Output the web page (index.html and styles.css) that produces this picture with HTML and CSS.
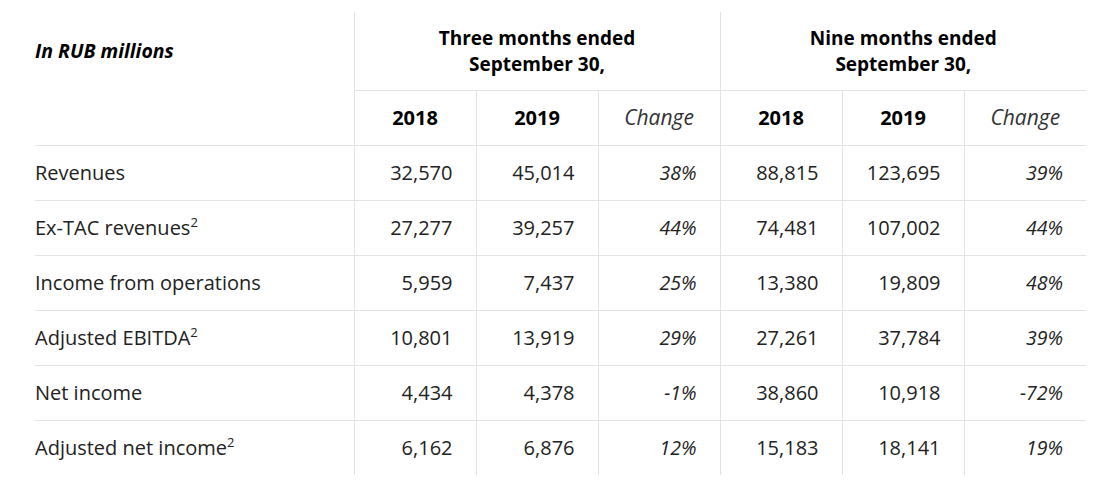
FILE: index.html
```html
<!DOCTYPE html>
<html lang="en">
<head>
<meta charset="utf-8">
<title>Financial results</title>
<link rel="stylesheet" href="styles.css">
</head>
<body>
<div class="wrap">
<table class="fin">
  <colgroup>
    <col class="c-label">
    <col class="c-num"><col class="c-num"><col class="c-num">
    <col class="c-num"><col class="c-num"><col class="c-num">
  </colgroup>
  <thead>
    <tr class="h1">
      <th class="unit" rowspan="2"><span>In RUB millions</span></th>
      <th class="period" colspan="3"><span class="pl">Three months ended</span><span class="pl">September 30,</span></th>
      <th class="period" colspan="3"><span class="pl">Nine months ended</span><span class="pl">September 30,</span></th>
    </tr>
    <tr class="h2">
      <th class="yr">2018</th><th class="yr">2019</th><th class="chg-h">Change</th>
      <th class="yr">2018</th><th class="yr">2019</th><th class="chg-h">Change</th>
    </tr>
  </thead>
  <tbody>
    <tr><td class="lbl">Revenues</td><td>32,570</td><td>45,014</td><td class="pct">38%</td><td>88,815</td><td>123,695</td><td class="pct">39%</td></tr>
    <tr><td class="lbl">Ex-TAC revenues<sup>2</sup></td><td>27,277</td><td>39,257</td><td class="pct">44%</td><td>74,481</td><td>107,002</td><td class="pct">44%</td></tr>
    <tr><td class="lbl">Income from operations</td><td>5,959</td><td>7,437</td><td class="pct">25%</td><td>13,380</td><td>19,809</td><td class="pct">48%</td></tr>
    <tr><td class="lbl">Adjusted EBITDA<sup>2</sup></td><td>10,801</td><td>13,919</td><td class="pct">29%</td><td>27,261</td><td>37,784</td><td class="pct">39%</td></tr>
    <tr><td class="lbl">Net income</td><td>4,434</td><td>4,378</td><td class="pct">-1%</td><td>38,860</td><td>10,918</td><td class="pct">-72%</td></tr>
    <tr><td class="lbl">Adjusted net income<sup>2</sup></td><td>6,162</td><td>6,876</td><td class="pct">12%</td><td>15,183</td><td>18,141</td><td class="pct">19%</td></tr>
  </tbody>
</table>
</div>
</body>
</html>
```
FILE: styles.css
```css
html, body {
  margin: 0;
  padding: 0;
  background: #fff;
}
body {
  font-family: "Open Sans", "Noto Sans", sans-serif;
  color: #1a1a1a;
}
.wrap {
  padding: 12px 0 0 35px;
}
.fin {
  border-collapse: collapse;
  table-layout: fixed;
  width: 1051px;
}
.c-label { width: 319px; }
.c-num { width: 122px; }

.fin th, .fin td {
  padding: 0;
  font-size: 20px;
  line-height: 23px;
}
.h1 th { height: 77px; }
.h2 th { height: 52px; padding-bottom: 2px; }
.fin tbody td { height: 51px; padding-bottom: 2px; padding-top: 1px; }

.fin th.unit {
  text-align: left;
  vertical-align: top;
  font-weight: 700;
  font-style: italic;
  color: #000;
  border-bottom: 1px solid #e3e3e3;
  padding-top: 27px;
  font-size: 19.5px;
}
.fin th.period {
  font-weight: 700;
  text-align: center;
  vertical-align: middle;
  border-left: 1px solid #e3e3e3;
  border-bottom: 1px solid #e3e3e3;
  color: #000;
  font-size: 19px;
  padding-bottom: 1px;
}
.pl {
  display: block;
  line-height: 26px;
}
.h2 th {
  border-left: 1px solid #e3e3e3;
  border-bottom: 1px solid #e3e3e3;
  text-align: center;
  vertical-align: middle;
}
.yr {
  font-weight: 700;
  color: #000;
}
.fin th.chg-h {
  font-weight: 400;
  font-style: italic;
  color: #333;
  font-size: 21px;
}
.fin tbody td {
  text-align: right;
  padding-right: 23px;
  vertical-align: middle;
  border-left: 1px solid #e3e3e3;
  border-bottom: 1px solid #e3e3e3;
  color: #222;
}
.fin tbody tr:last-child td {
  border-bottom: none;
}
.fin tbody td.lbl {
  text-align: left;
  border-left: none;
  padding-right: 0;
}
.fin tbody td.pct {
  font-style: italic;
  font-size: 19.5px;
}
sup {
  font-size: 13px;
  line-height: 0;
  vertical-align: 8px;
}
```
